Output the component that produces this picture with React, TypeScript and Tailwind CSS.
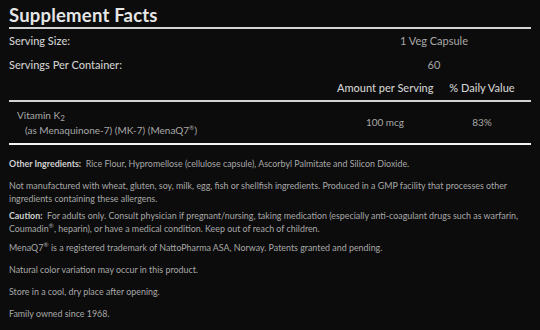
import React from "react";

const Sup = ({ children }: { children: React.ReactNode }) => (
  <sup className="text-[6.5px] leading-none relative top-[-4px] align-baseline">{children}</sup>
);

export default function App() {
  return (
    <div
      className="w-[540px] h-[330px] bg-[#0c0c0c] overflow-hidden px-[9px] pt-[3px] text-[#a8a8a8]"
      style={{ fontFamily: "Lato, 'Noto Sans', sans-serif" }}
    >
      <h1 className="text-[18.5px] font-bold leading-[24px] text-[#e6e6e6] tracking-[0.2px]">Supplement Facts</h1>
      <div className="h-[2px] bg-[#d4d4d4] w-[522px]" />
      <div className="w-[522px] text-[11px]">
        <div className="grid grid-cols-[1fr_194px] h-[24px] items-center">
          <span className="text-[#cfcfcf] font-medium">Serving Size:</span>
          <span className="text-center">1 Veg Capsule</span>
        </div>
        <div className="grid grid-cols-[1fr_194px] h-[24px] items-center">
          <span className="text-[#cfcfcf] font-medium">Servings Per Container:</span>
          <span className="text-center">60</span>
        </div>
        <div className="grid grid-cols-[1fr_96px_98px] h-[23px] items-center text-[#cfcfcf] font-medium whitespace-nowrap">
          <span />
          <span className="text-center">Amount per Serving</span>
          <span className="text-center">% Daily Value</span>
        </div>
      </div>
      <div className="h-[2px] bg-[#d4d4d4] w-[522px]" />
      <div className="w-[522px] grid grid-cols-[1fr_96px_98px] items-center text-[10px] h-[41px]">
        <div className="pl-[8px] leading-[15px]">
          <div>
            Vitamin K<sub className="text-[8px] leading-none relative top-[2px] align-baseline">2</sub>
          </div>
          <div className="pl-[8px]">
            (as Menaquinone-7) (MK-7) (MenaQ7<Sup>®</Sup>)
          </div>
        </div>
        <span className="text-center">100 mcg</span>
        <span className="text-center">83%</span>
      </div>
      <div className="h-[2px] bg-[#f2f2f2] w-[522px]" />
      <div className="text-[8.9px] leading-[13px] mt-[12px] flex flex-col w-[522px]">
        <p>
          <span className="font-bold text-[#d0d0d0]">Other Ingredients:</span>&nbsp; Rice Flour, Hypromellose (cellulose capsule), Ascorbyl Palmitate and Silicon Dioxide.
        </p>
        <p className="mt-[9px]">
          Not manufactured with wheat, gluten, soy, milk, egg, fish or shellfish ingredients. Produced in a GMP facility that processes other ingredients containing these allergens.
        </p>
        <p className="mt-[4px]">
          <span className="font-bold text-[#d0d0d0]">Caution:</span>&nbsp; For adults only. Consult physician if pregnant/nursing, taking medication (especially anti-coagulant drugs such as warfarin, Coumadin<Sup>®</Sup>, heparin), or have a medical condition. Keep out of reach of children.
        </p>
        <p className="mt-[6px]">
          MenaQ7<Sup>®</Sup> is a registered trademark of NattoPharma ASA, Norway. Patents granted and pending.
        </p>
        <p className="mt-[9px]">Natural color variation may occur in this product.</p>
        <p className="mt-[9px]">Store in a cool, dry place after opening.</p>
        <p className="mt-[9px]">Family owned since 1968.</p>
      </div>
    </div>
  );
}
